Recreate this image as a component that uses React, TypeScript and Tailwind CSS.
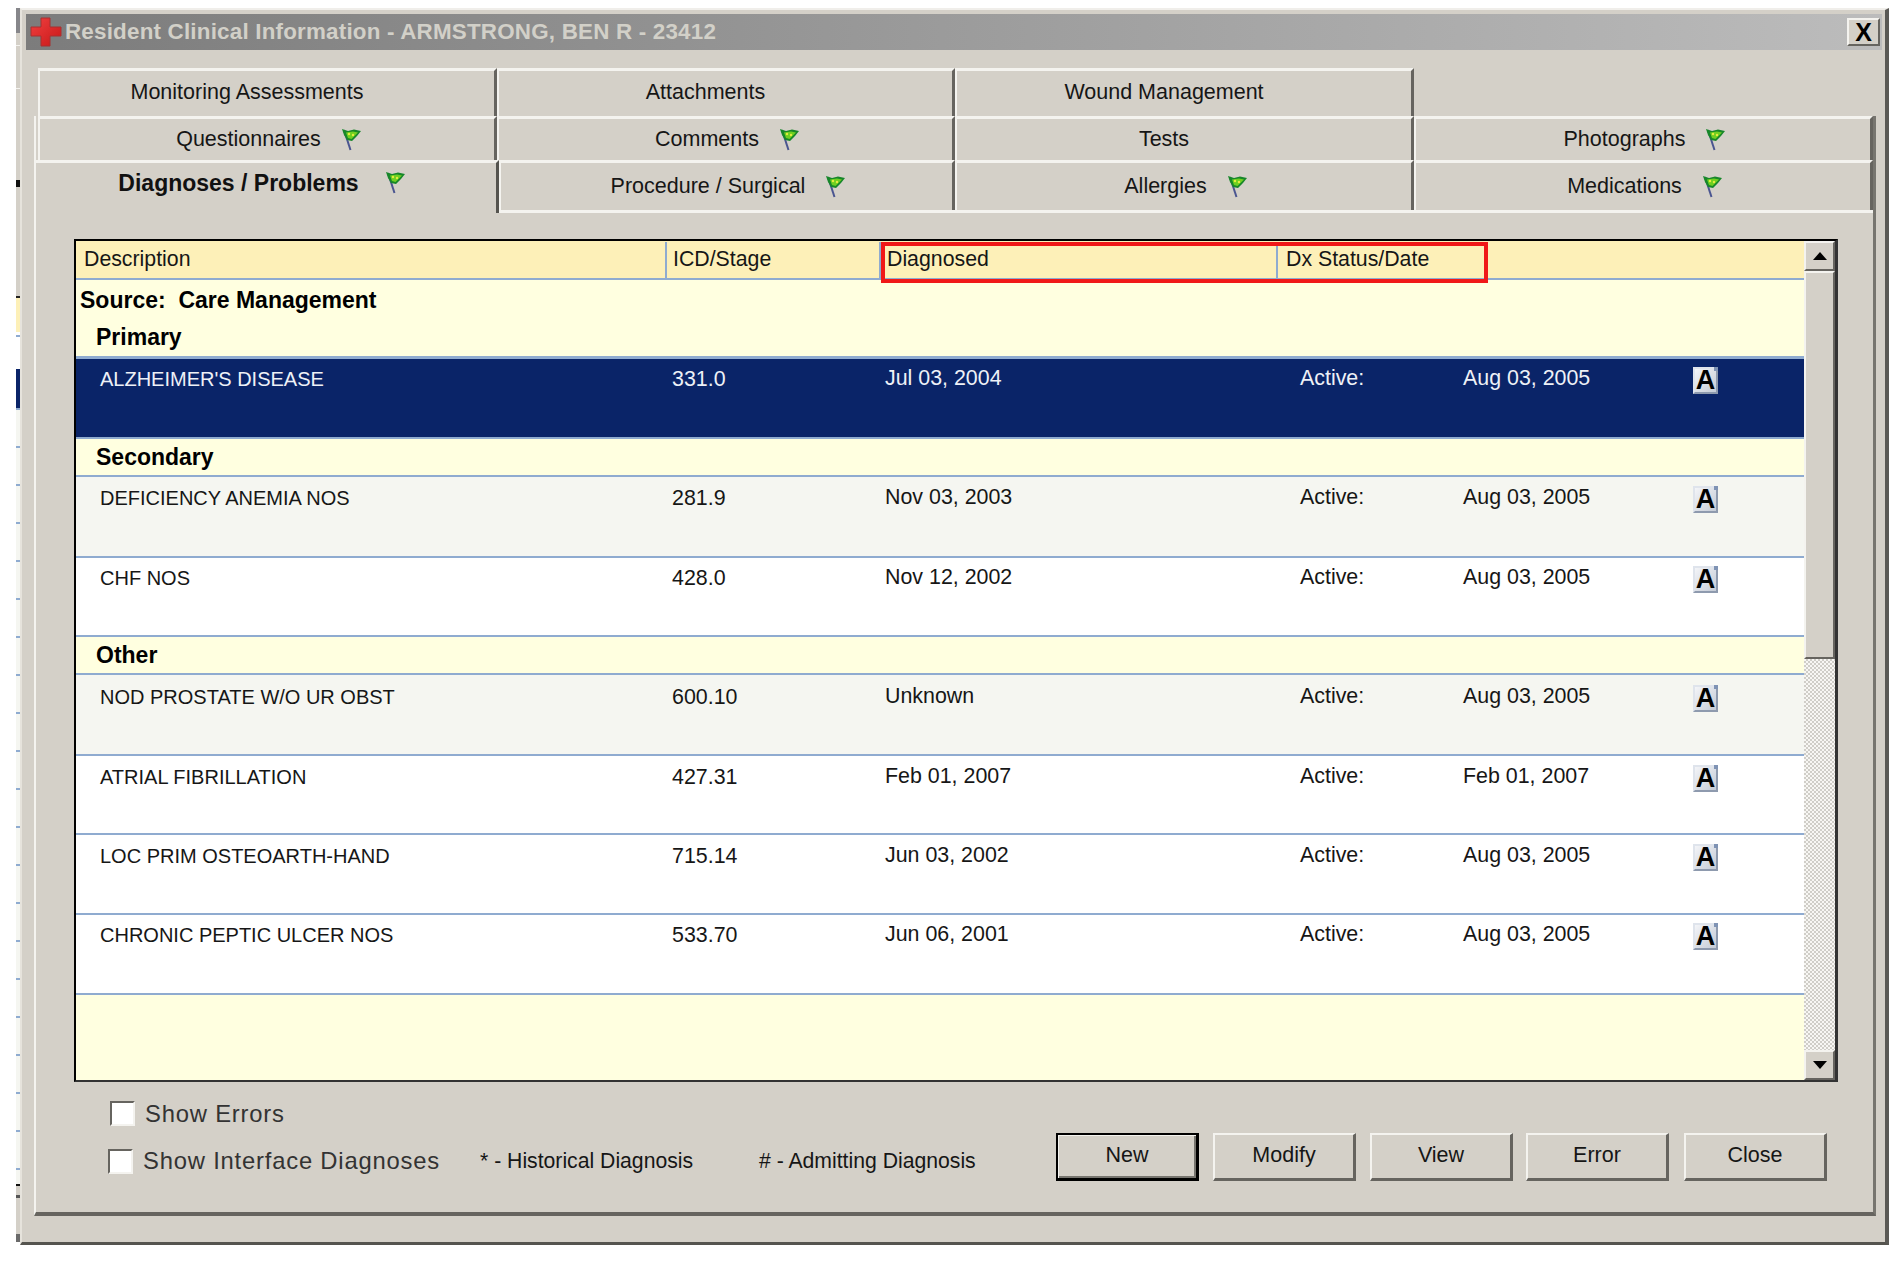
import React from "react";

function Flag() {
  return (
    <svg width="21" height="23" viewBox="0 0 21 23" className="shrink-0">
      <path d="M3 2 L9.5 22" stroke="#4a5590" strokeWidth="2" fill="none" />
      <path d="M1 1 L7 3 L13 1.5 L20 3 L16 8 L11 13 L6 12 L3 7 Z" fill="#17872a" />
      <path d="M5 4.5 L12 3.5 L17 4.5 L13.5 8 L10.5 11 L7 10 Z" fill="#6fd021" />
      <circle cx="8" cy="6" r="1.2" fill="#e4ec40" />
      <circle cx="12" cy="7" r="1.2" fill="#e4ec40" />
    </svg>
  );
}

function Cross() {
  return (
    <svg width="32" height="30" viewBox="0 0 32 30" className="shrink-0">
      <defs>
        <linearGradient id="crossFill" x1="0" y1="0" x2="1" y2="1">
          <stop offset="0" stopColor="#f04040" />
          <stop offset="1" stopColor="#c81818" />
        </linearGradient>
      </defs>
      <path d="M11 1 H20 V10 H31 V19 H20 V29 H11 V19 H1 V10 H11 Z" fill="url(#crossFill)" stroke="#a83030" strokeWidth="1" strokeLinejoin="round" />
    </svg>
  );
}

function DocIcon() {
  return (
    <div className="relative flex h-[27px] w-[25px] items-center justify-center border-2 border-t-[#dfe4ec] border-l-[#dfe4ec] border-r-[#8e9aae] border-b-[#8e9aae] bg-gradient-to-br from-[#f4f5f8] to-[#c4cbd6] text-[27px] font-bold leading-none text-black">
      A
      <span className="absolute right-[-2px] top-[-2px] h-[4px] w-[4px] bg-[#7f93b4]" />
    </div>
  );
}

function Tab({ label, flag, width, up }: { label: string; flag?: boolean; width: string; up?: boolean }) {
  return (
    <div className={`flex shrink-0 items-center justify-center border-t-[3px] border-l-[2px] border-r-[3px] border-t-[#f4f3ef] border-l-[#f4f3ef] border-r-[#66645f] text-[21.5px] text-[#161616] ${width} ${flag ? "pl-[4px]" : "pr-[40px]"} ${up ? "pb-[3px]" : "pb-[1px]"}`}>
      <span>{label}</span>
      {flag && (
        <span className="ml-[20px]">
          <Flag />
        </span>
      )}
    </div>
  );
}

const stripTop: [number, string][] = [
  [8, "#ffffff"], [25, "#86868a"], [12, "#d4d0c8"], [1, "#f4f3ef"], [42, "#d4d0c8"], [1, "#f4f3ef"], [91, "#d4d0c8"], [7, "#111111"], [109, "#d4d0c8"], [2, "#222222"], [34, "#fdf0b8"], [3, "#ffffff"], [2, "#8fabd0"], [32, "#ffffff"], [39, "#0a2468"], [2, "#8fabd0"],
];

function LeftStrip() {
  const ticks: [number, string][] = [];
  for (let i = 0; i < 20; i++) {
    ticks.push([36, "#f5f6f1"], [2, "#8fabd0"]);
  }
  const tail: [number, string][] = [[14, "#f5f6f1"], [2, "#111111"], [9, "#d4d0c8"], [3, "#555555"], [36, "#d4d0c8"], [8, "#6a6a6a"]];
  const all = [...stripTop, ...ticks, ...tail];
  return (
    <div className="flex h-[1245px] w-[4px] shrink-0 flex-col overflow-hidden">
      {all.map(([h, c], i) => (
        <div key={i} className="w-full shrink-0" style={{ height: h, backgroundColor: c }} />
      ))}
    </div>
  );
}

type Row = { d: string; c: string; dx: string; date: string; h: string; bg: string; pt: string };

function DataRow({ r, selected }: { r: Row; selected?: boolean }) {
  return (
    <div className={`grid grid-cols-[596px_213px_415px_163px_230px_auto] border-b-2 border-[#8fabd0] text-[21.4px] ${r.h} ${r.pt} ${selected ? "bg-[#0a2468] text-[#eef1f7]" : `${r.bg} text-[#161616]`}`}>
      <div className="pl-[24px] text-[20px] leading-[24px]">{r.d}</div>
      <div className="leading-[24px]">{r.c}</div>
      <div className="-mt-px leading-[24px]">{r.dx}</div>
      <div className="-mt-px leading-[24px]">Active:</div>
      <div className="-mt-px leading-[24px]">{r.date}</div>
      <div><DocIcon /></div>
    </div>
  );
}

function Section({ label, h }: { label: string; h: string }) {
  return (
    <div className={`flex items-center border-b-2 border-[#8fabd0] pl-[20px] text-[23px] font-bold text-black ${h}`}>{label}</div>
  );
}

function Checkbox() {
  return <div className="h-[25px] w-[25px] shrink-0 border-2 border-t-[#66645f] border-l-[#66645f] border-r-[#f4f3ef] border-b-[#f4f3ef] bg-white" />;
}

function Btn({ label, def, cls }: { label: string; def?: boolean; cls?: string }) {
  return (
    <div className={`flex h-[48px] w-[143px] items-center justify-center pb-[2px] text-[21.5px] text-[#161616] ${cls ?? ""} ${def ? "border-t-2 border-l-2 border-r-[3px] border-b-[3px] border-black shadow-[inset_1px_1px_0_#f4f3ef,inset_-2px_-2px_0_#77756f]" : "border-t-2 border-l-2 border-r-[3px] border-b-[3px] border-t-[#f4f3ef] border-l-[#f4f3ef] border-r-[#66645f] border-b-[#66645f]"}`}>
      {label}
    </div>
  );
}

function Arrow({ up }: { up?: boolean }) {
  return (
    <svg width="16" height="10" viewBox="0 0 16 10">
      <polygon points={up ? "8,1 15,9 1,9" : "1,1 15,1 8,9"} fill="#000" />
    </svg>
  );
}

export default function App() {
  const sel: Row = { d: "ALZHEIMER'S DISEASE", c: "331.0", dx: "Jul 03, 2004", date: "Aug 03, 2005", h: "h-[80px]", bg: "", pt: "pt-[8px]" };
  const sec: Row[] = [
    { d: "DEFICIENCY ANEMIA NOS", c: "281.9", dx: "Nov 03, 2003", date: "Aug 03, 2005", h: "h-[81px]", bg: "bg-[#f5f6f1]", pt: "pt-[9px]" },
    { d: "CHF NOS", c: "428.0", dx: "Nov 12, 2002", date: "Aug 03, 2005", h: "h-[79px]", bg: "bg-white", pt: "pt-[8px]" },
  ];
  const oth: Row[] = [
    { d: "NOD PROSTATE W/O UR OBST", c: "600.10", dx: "Unknown", date: "Aug 03, 2005", h: "h-[81px]", bg: "bg-[#f5f6f1]", pt: "pt-[10px]" },
    { d: "ATRIAL FIBRILLATION", c: "427.31", dx: "Feb 01, 2007", date: "Feb 01, 2007", h: "h-[79px]", bg: "bg-white", pt: "pt-[9px]" },
    { d: "LOC PRIM OSTEOARTH-HAND", c: "715.14", dx: "Jun 03, 2002", date: "Aug 03, 2005", h: "h-[80px]", bg: "bg-white", pt: "pt-[9px]" },
    { d: "CHRONIC PEPTIC ULCER NOS", c: "533.70", dx: "Jun 06, 2001", date: "Aug 03, 2005", h: "h-[80px]", bg: "bg-white", pt: "pt-[8px]" },
  ];
  return (
    <div className="flex min-h-[1262px] bg-white pl-[16px] font-['Liberation_Sans',Arial,sans-serif]">
      <LeftStrip />
      <div className="mt-[8px] flex h-[1237px] w-[1869px] flex-col border-t-2 border-l-2 border-r-[4px] border-b-[3px] border-t-[#f0eeea] border-l-[#e6e3dc] border-r-[#5a5955] border-b-[#55544f] bg-[#d4d0c8] pl-[4px] pr-[3px] pt-[4px]">
        <div className="flex h-[36px] shrink-0 items-center bg-gradient-to-r from-[#7c7c7c] to-[#bcbcbc] pl-[4px] pr-[2px]">
          <Cross />
          <div className="ml-[3px] flex-1 text-[22.4px] font-bold tracking-[0.2px] text-[#d2d0c8]">
            Resident Clinical Information - ARMSTRONG, BEN R - 23412
          </div>
          <div className="flex h-[28px] w-[33px] items-center justify-center border-2 border-t-[#f4f3ef] border-l-[#f4f3ef] border-r-[#66645f] border-b-[#66645f] bg-[#d4d0c8] text-[25px] font-bold leading-none text-black">
            X
          </div>
        </div>

        <div className="mt-[18px] flex h-[48px] shrink-0 pl-[12px]">
          <Tab label="Monitoring Assessments" width="w-[459px]" up />
          <Tab label="Attachments" width="w-[458px]" up />
          <Tab label="Wound Management" width="w-[459px]" up />
        </div>

        <div className="ml-[8px] mr-[6px] flex h-[1100px] flex-col border-l-2 border-r-[3px] border-b-[4px] border-l-[#f4f3ef] border-r-[#77756f] border-b-[#66645f]">
          <div className="flex h-[44px] shrink-0 pl-[2px]">
            <Tab label="Questionnaires" flag width="w-[459px]" />
            <Tab label="Comments" flag width="w-[458px]" />
            <Tab label="Tests" width="w-[459px]" />
            <Tab label="Photographs" flag width="w-[459px]" />
          </div>
          <div className="flex h-[53px] shrink-0">
            <div className="flex w-[463px] shrink-0 items-start justify-center border-t-[3px] border-r-[3px] border-t-[#f4f3ef] border-r-[#55544f] pt-[3px] pr-[8px] text-[23px] font-bold text-[#111111]">
              <span>Diagnoses / Problems</span>
              <span className="ml-[26px] mt-[5px]"><Flag /></span>
            </div>
            <div className="flex flex-1 border-b-[3px] border-b-[#f4f3ef]">
              <Tab label="Procedure / Surgical" flag width="w-[456px]" />
              <Tab label="Allergies" flag width="w-[459px]" />
              <Tab label="Medications" flag width="w-[459px]" />
            </div>
          </div>

          <div className="pl-[38px] pt-[26px]">
            <div className="flex h-[843px] w-[1764px] border-t-2 border-l-2 border-r-[3px] border-b-2 border-t-black border-l-black border-r-[#333333] border-b-[#333333] bg-[#ffffe0]">
              <div className="relative flex flex-1 flex-col">
                <div className="flex h-[39px] shrink-0 items-center border-b-2 border-[#8fabd0] bg-[#fdf0b8] pt-[1px] text-[21.3px] text-[#161616]">
                  <div className="flex h-full w-[591px] items-center border-r-2 border-[#8fabd0] pl-[8px]">Description</div>
                  <div className="flex h-full w-[214px] items-center border-r-2 border-[#8fabd0] pl-[6px]">ICD/Stage</div>
                  <div className="flex h-full w-[397px] items-center border-r-2 border-[#8fabd0] pl-[6px]">Diagnosed</div>
                  <div className="flex h-full items-center pl-[8px]">Dx Status/Date</div>
                </div>
                <div className="pointer-events-none absolute left-[805px] top-[1px] h-[41px] w-[607px] border-[4px] border-[#f01818]" />
                <div className="flex h-[79px] shrink-0 flex-col justify-between border-b-[3px] border-[#8fabd0]">
                  <div className="pl-[4px] pt-[6px] text-[23px] font-bold leading-[28px] text-black">Source:&nbsp; Care Management</div>
                  <div className="pb-[5px] pl-[20px] text-[23px] font-bold leading-[28px] text-black">Primary</div>
                </div>
                <DataRow r={sel} selected />
                <Section label="Secondary" h="h-[38px]" />
                {sec.map((r) => <DataRow key={r.d} r={r} />)}
                <Section label="Other" h="h-[38px]" />
                {oth.map((r) => <DataRow key={r.d} r={r} />)}
                <div className="flex-1" />
              </div>
              <div className="flex w-[31px] shrink-0 flex-col bg-[#d4d0c8]">
                <div className="flex h-[30px] shrink-0 items-center justify-center border-2 border-t-[#f4f3ef] border-l-[#f4f3ef] border-r-[#66645f] border-b-[#66645f]"><Arrow up /></div>
                <div className="h-[388px] shrink-0 border-2 border-t-[#f4f3ef] border-l-[#f4f3ef] border-r-[#66645f] border-b-[#66645f]" />
                <div className="flex-1 bg-[repeating-conic-gradient(#d0cec8_0_25%,#f8f7f4_0_50%)] bg-[length:4px_4px]" />
                <div className="flex h-[30px] shrink-0 items-center justify-center border-2 border-t-[#f4f3ef] border-l-[#f4f3ef] border-r-[#66645f] border-b-[#66645f]"><Arrow /></div>
              </div>
            </div>

            <div className="flex">
              <div className="w-[982px] shrink-0">
                <div className="ml-[36px] mt-[19px] flex h-[25px] items-center">
                  <Checkbox />
                  <span className="ml-[10px] text-[23.8px] tracking-[0.8px] text-[#333333]">Show Errors</span>
                </div>
                <div className="ml-[34px] mt-[22px] flex h-[26px] items-center">
                  <Checkbox />
                  <span className="ml-[10px] w-[337px] shrink-0 text-[23.8px] tracking-[0.8px] text-[#333333]">Show Interface Diagnoses</span>
                  <span className="w-[279px] shrink-0 text-[21.2px] text-[#161616]">* - Historical Diagnosis</span>
                  <span className="shrink-0 text-[21.2px] text-[#161616]"># - Admitting Diagnosis</span>
                </div>
              </div>
              <div className="mt-[51px] flex">
                <Btn label="New" def />
                <Btn label="Modify" cls="ml-[14px]" />
                <Btn label="View" cls="ml-[14px]" />
                <Btn label="Error" cls="ml-[13px]" />
                <Btn label="Close" cls="ml-[15px]" />
              </div>
            </div>
          </div>
        </div>
      </div>
    </div>
  );
}
